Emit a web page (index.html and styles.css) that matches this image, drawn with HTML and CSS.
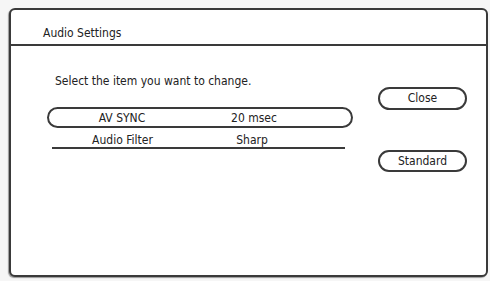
FILE: index.html
```html
<!DOCTYPE html>
<html>
<head>
<meta charset="utf-8">
<link rel="stylesheet" href="styles.css">
</head>
<body>
<div class="frame">
  <div class="header"><span class="title">Audio Settings</span></div>
  <div class="content">
    <div class="left">
      <div class="prompt">Select the item you want to change.</div>
      <div class="row selected"><span>AV SYNC</span><span>20 msec</span></div>
      <div class="row plain"><span>Audio Filter</span><span>Sharp</span></div>
    </div>
    <div class="right">
      <div class="btn">Close</div>
      <div class="btn">Standard</div>
    </div>
  </div>
</div>
</body>
</html>
```
FILE: styles.css
```css
html, body {
  margin: 0;
  padding: 0;
  background: #f6f6f6;
}
body {
  width: 490px;
  height: 281px;
  overflow: hidden;
  font-family: "DejaVu Sans Condensed", "DejaVu Sans", sans-serif;
  font-size: 12px;
  color: #222;
}
.frame {
  margin: 8px 2px 0 9px;
  width: 479px;
  height: 269px;
  box-sizing: border-box;
  border: 2px solid #3a3a3a;
  border-radius: 6px;
  background: #fff;
  box-shadow: -1px 1px 1px #999;
}
.header {
  border-bottom: 2px solid #3a3a3a;
  padding: 16px 0 0 32px;
  box-sizing: border-box;
  line-height: 14px;
  height: 36px;
}
.content {
  display: flex;
  padding: 28px 0 0 36px;
}
.left {
  width: 306px;
}
.prompt {
  padding-left: 8px;
  line-height: 14px;
}
.row {
  display: grid;
  grid-template-columns: 146px 118px;
  line-height: 14px;
}
.row span {
  text-align: center;
}
.selected {
  margin-top: 19px;
  height: 21px;
  box-sizing: border-box;
  border: 2px solid #3a3a3a;
  border-radius: 11px;
  align-items: center;
}
.plain {
  margin: 5px 8px 0 5px;
  border-bottom: 2px solid #3a3a3a;
  grid-template-columns: 141px 118px;
}
.right {
  margin-left: 25px;
  padding-top: 13px;
  display: flex;
  flex-direction: column;
  gap: 40px;
}
.btn {
  width: 89px;
  height: 23px;
  box-sizing: border-box;
  border: 2px solid #3a3a3a;
  border-radius: 12px;
  text-align: center;
  line-height: 19px;
}
.btn + .btn {
  height: 22px;
  line-height: 18px;
}
```
